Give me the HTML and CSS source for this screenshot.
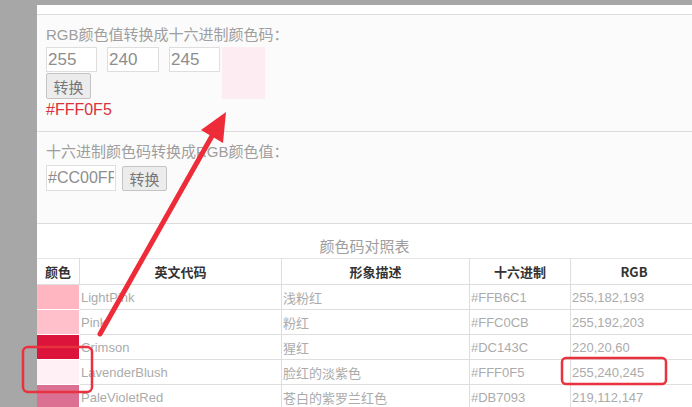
FILE: index.html
```html
<!DOCTYPE html>
<html lang="zh">
<head>
    <meta charset="UTF-8">
    <title>颜色码转换</title>
    <link rel="stylesheet" href="styles.css">
</head>
<body>
    <div class="page">
        <div class="top-strip"></div>

        <!-- RGB转十六进制 -->
        <div class="panel panel-rgb">
            <div class="panel-title">RGB颜色值转换成十六进制颜色码：</div>
            <div class="rgb-form">
                <div class="fields">
                    <div class="inputs">
                        <input class="num w51" value="255">
                        <input class="num w52" value="240">
                        <input class="num w51" value="245">
                    </div>
                    <button class="btn">转换</button>
                </div>
                <div class="swatch"></div>
            </div>
            <div class="result">#FFF0F5</div>
        </div>

        <!-- 十六进制转RGB -->
        <div class="panel panel-hex">
            <div class="panel-title">十六进制颜色码转换成RGB颜色值：</div>
            <div class="hex-form">
                <input class="num hex" value="#CC00FF">
                <button class="btn">转换</button>
            </div>
        </div>

        <div class="table-area">
            <div class="table-title">颜色码对照表</div>
            <table class="colors">
                <tr>
                    <th class="c1">颜色</th>
                    <th class="c2">英文代码</th>
                    <th class="c3">形象描述</th>
                    <th class="c4">十六进制</th>
                    <th class="c5">RGB</th>
                </tr>
                <tr>
                    <td class="sw" style="background:#FFB6C1"></td>
                    <td>LightPink</td><td>浅粉红</td><td>#FFB6C1</td><td>255,182,193</td>
                </tr>
                <tr>
                    <td class="sw" style="background:#FFC0CB"></td>
                    <td>Pink</td><td>粉红</td><td>#FFC0CB</td><td>255,192,203</td>
                </tr>
                <tr>
                    <td class="sw" style="background:#DC143C"></td>
                    <td>Crimson</td><td>猩红</td><td>#DC143C</td><td>220,20,60</td>
                </tr>
                <tr>
                    <td class="sw" style="background:#FFF0F5"></td>
                    <td>LavenderBlush</td><td>脸红的淡紫色</td><td>#FFF0F5</td><td>255,240,245</td>
                </tr>
                <tr>
                    <td class="sw" style="background:#DB7093"></td>
                    <td>PaleVioletRed</td><td>苍白的紫罗兰红色</td><td>#DB7093</td><td>219,112,147</td>
                </tr>
            </table>
        </div>
    </div>

    <!-- 标注 -->
    <svg class="marks" width="692" height="407" viewBox="0 0 692 407">
        <line x1="100" y1="334" x2="212" y2="136" stroke="#ee2b38" stroke-width="5" stroke-linecap="round"/>
        <polygon points="226,112 223,143 201,130" fill="#ee2b38"/>
        <rect x="23" y="347" width="69" height="45" rx="5" fill="none" stroke="#e8323e" stroke-width="2.5"/>
        <rect x="562" y="358" width="104" height="26" rx="4" fill="none" stroke="#e8323e" stroke-width="2.5"/>
    </svg>
</body>
</html>
```

FILE: styles.css
```css
body {
    margin: 0;
    background: #a7a7a7;
    font-family: "Liberation Sans", "Noto Sans CJK SC", sans-serif;
    overflow: hidden;
    height: 407px;
    position: relative;
}
.page {
    margin: 5px 0 0 37px;
    background: #ffffff;
    height: 402px;
    overflow: hidden;
}
.top-strip {
    height: 9px;
    border-bottom: 1px solid #dcdcdc;
}
.panel {
    background: #fbfbfb;
    border-bottom: 1px solid #dcdcdc;
    padding: 10px 9px 0;
    box-sizing: border-box;
}
.panel-rgb {
    height: 117px;
}
.panel-hex {
    height: 92px;
}
.panel-title {
    font-size: 15px;
    line-height: 20px;
    color: #9e9e9e;
    margin-bottom: 2px;
}
.rgb-form {
    display: flex;
    align-items: flex-start;
}
.inputs {
    display: flex;
    gap: 10px;
    margin-bottom: 1px;
}
.num {
    height: 25px;
    box-sizing: border-box;
    border: 1px solid #dedede;
    background: #fff;
    font-family: "Liberation Sans", sans-serif;
    font-size: 17px;
    color: #8e8e8e;
    padding: 0 1px;
    margin: 0;
    outline: none;
}
.w51 {
    width: 51px;
}
.w52 {
    width: 52px;
}
.btn {
    display: block;
    width: 45px;
    height: 26px;
    margin: 0;
    padding: 0;
    border: 1px solid #c4c4c4;
    border-radius: 2px;
    background: #ececec;
    font-family: "Noto Sans CJK SC", sans-serif;
    font-size: 15px;
    color: #777;
}
.swatch {
    width: 43px;
    height: 52px;
    margin-left: 2px;
    background: #fdedf2;
}
.result {
    margin-top: 1px;
    font-size: 16px;
    line-height: 20px;
    color: #d8323c;
}
.panel-hex .panel-title {
    margin-bottom: 3px;
}
.hex-form {
    display: flex;
    align-items: center;
    gap: 6px;
}
.hex {
    width: 70px;
    height: 26px;
    font-size: 16px;
    padding: 0 1px;
}
.hex-form .btn {
    height: 25px;
}
.table-area {
    padding-top: 12px;
}
.table-title {
    text-align: center;
    font-family: "Noto Sans CJK SC", sans-serif;
    font-size: 15px;
    line-height: 20px;
    color: #9e9e9e;
    margin-bottom: 2px;
}
.colors {
    border-collapse: collapse;
    table-layout: fixed;
    width: 656px;
}
.colors th,
.colors td {
    border: 1px solid #dedede;
    height: 24px;
    padding: 0 1px;
    font-size: 13px;
    white-space: nowrap;
    overflow: hidden;
}
.colors th {
    height: 25px;
    font-family: "Noto Sans CJK SC", sans-serif;
    font-weight: bold;
    color: #333;
    text-align: center;
    border-top-color: #e6e6e6;
}
.colors td {
    color: #ababab;
    font-family: "Liberation Sans", "Noto Sans CJK SC", sans-serif;
}
.colors tr > :first-child {
    border-left: none;
}
.colors td.sw {
    border-color: #fff;
    border-left: none;
}
.c1 { width: 40px; }
.c2 { width: 199px; }
.c3 { width: 185px; }
.c4 { width: 98px; }
.c5 { width: 124px; }
.marks {
    position: absolute;
    top: 0;
    left: 0;
    pointer-events: none;
}
```
